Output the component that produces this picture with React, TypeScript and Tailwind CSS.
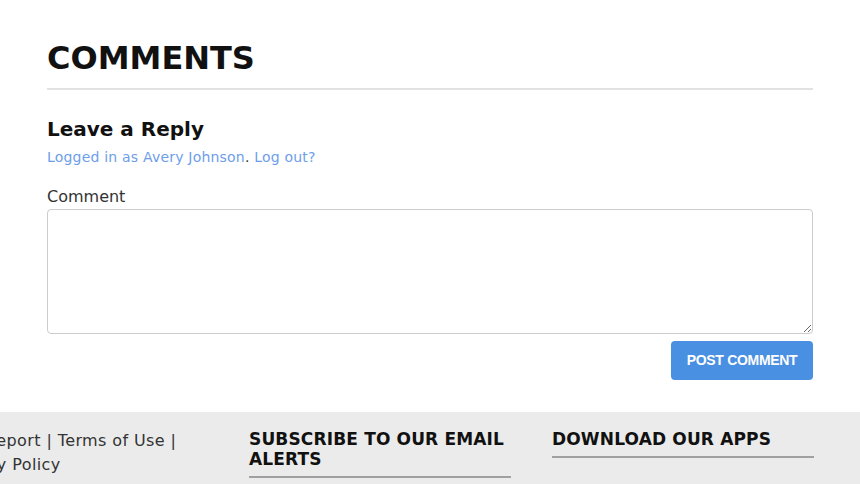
export default function App() {
  return (
    <div className="h-[484px] w-full overflow-hidden bg-white font-['DejaVu_Sans',sans-serif] text-[#222]">
      {/* Comments section */}
      <section className="flex flex-col px-[47px] pt-[39px]">
        <h2 className="text-[32px] font-bold leading-[1.2] text-[#111]">COMMENTS</h2>
        <div className="mt-[11px] h-[2px] bg-[#e2e2e2]" />

        <h3 className="mt-[27px] text-[20px] font-bold leading-[1.2] text-[#111]">Leave a Reply</h3>
        <p className="mt-[6px] text-[14px] leading-[21px] tracking-[0.2px] text-[#333]">
          <a href="#" className="text-[#6d9eeb]">Logged in as Avery Johnson</a>.{' '}
          <a href="#" className="text-[#6d9eeb]">Log out?</a>
        </p>

        <label className="mt-[17px] block text-[16px] leading-[24px] text-[#333]">Comment</label>
        <textarea className="h-[125px] w-full rounded-[4px] border border-[#cccccc] bg-white px-3 py-2 text-[16px] outline-none" />

        <button className="mt-[7px] ml-auto h-[39px] w-[142px] rounded-[4px] bg-[#4a90e2] font-['Liberation_Sans',sans-serif] text-[14px] font-bold tracking-[-0.3px] text-white">
          POST COMMENT
        </button>
      </section>

      {/* Footer */}
      <footer className="mt-[32px] h-[140px] bg-[#ebebeb] pt-[17px]">
        <div className="ml-[-54px] flex gap-[41px]">
          <div className="w-[262px] text-[16px] leading-[24px] tracking-[0.4px] text-[#333]">
            EEO Report | Terms of Use | Privacy Policy
          </div>
          <div className="w-[262px]">
            <h4 className="border-b-2 border-[#a0a0a0] pb-[7px] text-[17px] font-bold leading-[20px] tracking-[0.15px] text-[#111]">
              SUBSCRIBE TO OUR EMAIL ALERTS
            </h4>
          </div>
          <div className="w-[262px]">
            <h4 className="border-b-2 border-[#a0a0a0] pb-[7px] text-[17px] font-bold leading-[20px] tracking-[0.15px] text-[#111]">
              DOWNLOAD OUR APPS
            </h4>
          </div>
        </div>
      </footer>
    </div>
  )
}
